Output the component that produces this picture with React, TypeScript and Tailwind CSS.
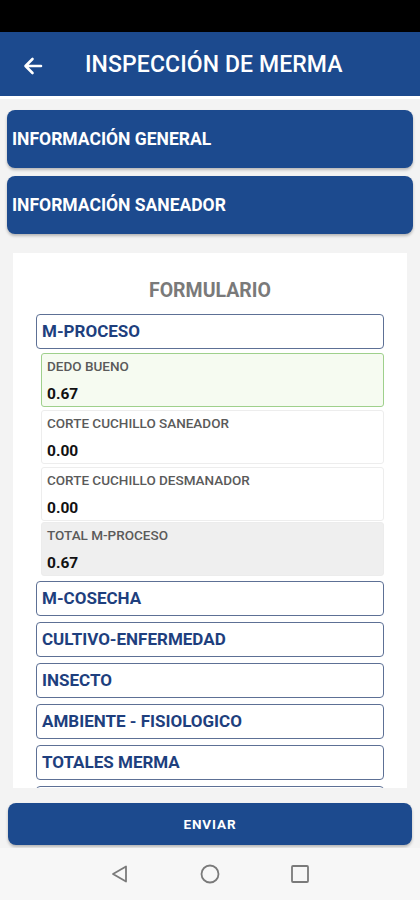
import React from "react";

const sections = ["M-COSECHA", "CULTIVO-ENFERMEDAD", "INSECTO", "AMBIENTE - FISIOLOGICO", "TOTALES MERMA"];

function Field({ label, value, variant, className = "" }: { label: string; value: string; variant: "green" | "white" | "gray"; className?: string }) {
  const cls =
    variant === "green"
      ? "bg-[#f6fbf1] border border-[#9fd08c]"
      : variant === "gray"
      ? "bg-[#efefef] border border-[#ececec]"
      : "bg-white border border-[#ededed]";
  return (
    <div className={`ml-[5px] h-[54px] rounded-[3px] px-[5px] pt-[4px] flex flex-col ${cls} ${className}`}>
      <span className="text-[13.5px] leading-[16px] font-medium text-[#5a5a5a]">{label}</span>
      <span className="mt-[11px] text-[15.5px] leading-[18px] font-bold text-[#111]">{value}</span>
    </div>
  );
}

function SectionBox({ title }: { title: string }) {
  return (
    <div className="h-[35px] shrink-0 rounded-[4px] border-[1.5px] border-[#5d7095] bg-white flex items-center px-[5px]">
      <span className="text-[17px] font-bold text-[#1e3f7e] leading-none">{title}</span>
    </div>
  );
}

export default function App() {
  return (
    <div className="w-[420px] h-[900px] overflow-hidden bg-[#f3f3f3] flex flex-col" style={{ fontFamily: "Roboto, 'Noto Sans', sans-serif" }}>
      <div className="h-[32px] bg-black shrink-0" />
      <div className="h-[64px] bg-[#1c4a8e] shrink-0 flex items-center pt-[3px]">
        <svg className="ml-[23px]" width="20" height="18" viewBox="0 0 20 18" fill="none" stroke="white" strokeWidth="2.6" strokeLinecap="round" strokeLinejoin="round">
          <path d="M18 9H3M9.5 2L2.5 9l7 7" />
        </svg>
        <span className="ml-[42px] text-white text-[23px] font-medium tracking-[0.1px]">INSPECCIÓN DE MERMA</span>
      </div>
      <div className="h-[3px] bg-white shrink-0" />
      <div className="px-[7px] pt-[11px] flex flex-col gap-[8px] shrink-0">
        <div className="h-[58px] rounded-[8px] bg-[#1c4a8e] shadow-[0_2px_3px_rgba(0,0,0,0.25)] flex items-center px-[5px]">
          <span className="text-white text-[17.5px] font-bold">INFORMACIÓN GENERAL</span>
        </div>
        <div className="h-[58px] rounded-[8px] bg-[#1c4a8e] shadow-[0_2px_3px_rgba(0,0,0,0.25)] flex items-center px-[5px]">
          <span className="text-white text-[17.5px] font-bold">INFORMACIÓN SANEADOR</span>
        </div>
      </div>
      <div className="mx-[13px] mt-[19px] h-[535px] bg-white overflow-hidden shrink-0 px-[23px] pt-[26px] flex flex-col">
        <div className="text-center text-[19.5px] leading-[24px] font-bold text-[#7a7a7a]">FORMULARIO</div>
        <div className="mt-[11px] flex flex-col">
          <SectionBox title="M-PROCESO" />
          <div className="mt-[4px] flex flex-col">
            <Field label="DEDO BUENO" value="0.67" variant="green" />
            <Field label="CORTE CUCHILLO SANEADOR" value="0.00" variant="white" className="mt-[3px]" />
            <Field label="CORTE CUCHILLO DESMANADOR" value="0.00" variant="white" className="mt-[3px]" />
            <Field label="TOTAL M-PROCESO" value="0.67" variant="gray" className="mt-[1px]" />
          </div>
          <div className="mt-[5px] flex flex-col gap-[6px]">
            {sections.map((s) => (
              <SectionBox key={s} title={s} />
            ))}
            <div className="h-[35px] shrink-0 rounded-[4px] border-[1.5px] border-[#5d7095] bg-white" />
          </div>
        </div>
      </div>
      <div className="px-[8px] pt-[15px] shrink-0">
        <div className="h-[42px] rounded-[8px] bg-[#1c4a8e] shadow-[0_2px_3px_rgba(0,0,0,0.25)] flex items-center justify-center">
          <span className="text-white text-[13.5px] font-bold tracking-[0.9px]">ENVIAR</span>
        </div>
      </div>
      <div className="mt-[3px] h-[52px] shrink-0 bg-[#f7f7f7] relative flex items-center justify-center">
        <div className="flex items-center gap-[70px]">
          <svg width="20" height="20" viewBox="0 0 20 20" fill="none" stroke="#7a7a7a" strokeWidth="1.8" strokeLinejoin="round">
            <path d="M16 2.5V17.5L3 10Z" />
          </svg>
          <svg width="20" height="20" viewBox="0 0 20 20" fill="none" stroke="#7a7a7a" strokeWidth="1.8">
            <circle cx="10" cy="10" r="8.5" />
          </svg>
          <svg width="20" height="20" viewBox="0 0 20 20" fill="none" stroke="#7a7a7a" strokeWidth="1.8">
            <rect x="2" y="2" width="16" height="16" rx="1" />
          </svg>
        </div>
      </div>
    </div>
  );
}
